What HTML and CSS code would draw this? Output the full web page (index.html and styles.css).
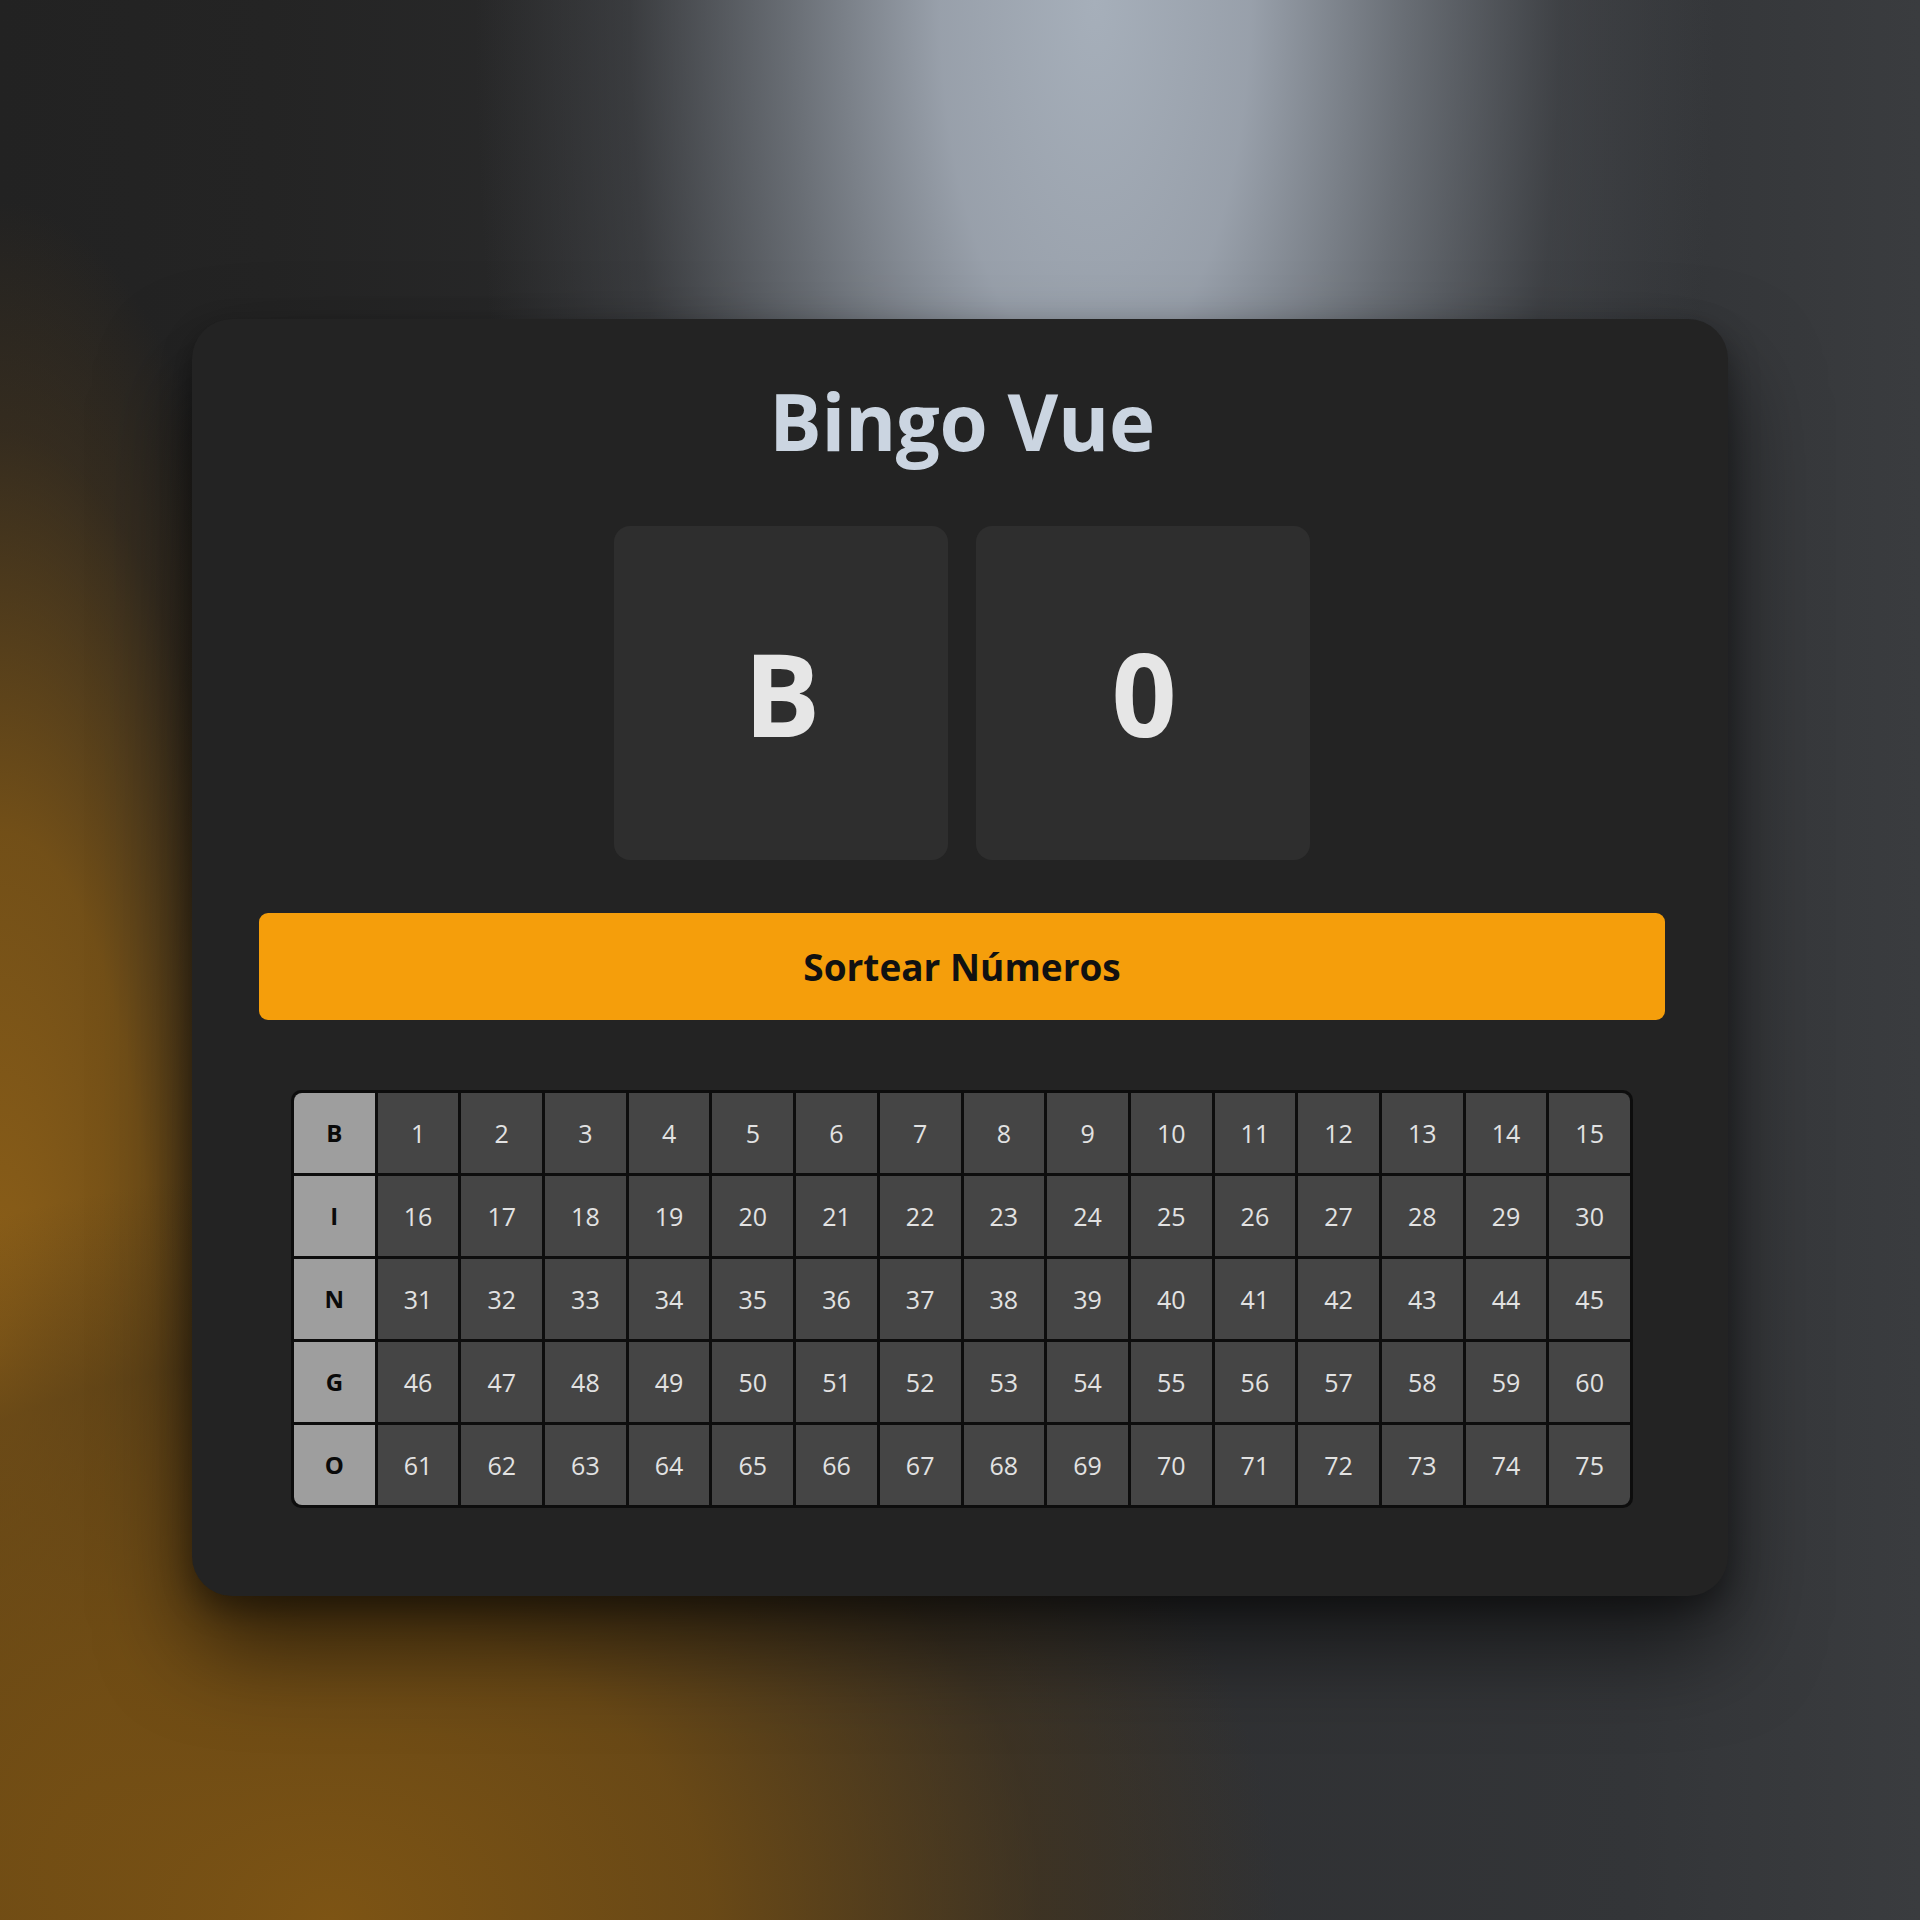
FILE: index.html
```html
<!DOCTYPE html>
<html lang="pt">
<head>
<meta charset="utf-8">
<title>Bingo Vue</title>
<link rel="stylesheet" href="styles.css">
</head>
<body>
<main class="card">
  <h1 class="title">Bingo Vue</h1>
  <div class="display">
    <div class="display-box">B</div>
    <div class="display-box">0</div>
  </div>
  <button class="draw-btn">Sortear Números</button>
  <div class="board">
    <div class="cell head">B</div><div class="cell">1</div><div class="cell">2</div><div class="cell">3</div><div class="cell">4</div><div class="cell">5</div><div class="cell">6</div><div class="cell">7</div><div class="cell">8</div><div class="cell">9</div><div class="cell">10</div><div class="cell">11</div><div class="cell">12</div><div class="cell">13</div><div class="cell">14</div><div class="cell tr">15</div>
    <div class="cell head">I</div><div class="cell">16</div><div class="cell">17</div><div class="cell">18</div><div class="cell">19</div><div class="cell">20</div><div class="cell">21</div><div class="cell">22</div><div class="cell">23</div><div class="cell">24</div><div class="cell">25</div><div class="cell">26</div><div class="cell">27</div><div class="cell">28</div><div class="cell">29</div><div class="cell">30</div>
    <div class="cell head">N</div><div class="cell">31</div><div class="cell">32</div><div class="cell">33</div><div class="cell">34</div><div class="cell">35</div><div class="cell">36</div><div class="cell">37</div><div class="cell">38</div><div class="cell">39</div><div class="cell">40</div><div class="cell">41</div><div class="cell">42</div><div class="cell">43</div><div class="cell">44</div><div class="cell">45</div>
    <div class="cell head">G</div><div class="cell">46</div><div class="cell">47</div><div class="cell">48</div><div class="cell">49</div><div class="cell">50</div><div class="cell">51</div><div class="cell">52</div><div class="cell">53</div><div class="cell">54</div><div class="cell">55</div><div class="cell">56</div><div class="cell">57</div><div class="cell">58</div><div class="cell">59</div><div class="cell">60</div>
    <div class="cell head bl">O</div><div class="cell">61</div><div class="cell">62</div><div class="cell">63</div><div class="cell">64</div><div class="cell">65</div><div class="cell">66</div><div class="cell">67</div><div class="cell">68</div><div class="cell">69</div><div class="cell">70</div><div class="cell">71</div><div class="cell">72</div><div class="cell">73</div><div class="cell">74</div><div class="cell br">75</div>
  </div>
</main>
</body>
</html>
```

FILE: styles.css
```css
* { box-sizing: border-box; }

html, body { margin: 0; padding: 0; }

body {
  min-height: 1920px;
  padding-bottom: 6px;
  display: flex;
  align-items: center;
  justify-content: center;
  font-family: "Open Sans", "Noto Sans", sans-serif;
  background-color: #2d2e30;
  background-image:
    radial-gradient(ellipse 620px 1500px at 1095px 0px, rgba(166,175,186,1) 0%, rgba(158,166,177,0.95) 25%, rgba(120,126,134,0.78) 50%, rgba(75,78,83,0.5) 75%, rgba(50,52,55,0) 100%),
    radial-gradient(ellipse 950px 750px at 330px 1920px, rgba(125,84,20,1) 0%, rgba(112,76,20,0.9) 40%, rgba(75,54,22,0.5) 75%, rgba(40,34,28,0) 100%),
    radial-gradient(ellipse 340px 1150px at 0px 1350px, rgba(142,96,24,1) 0%, rgba(128,87,22,0.85) 45%, rgba(80,58,26,0.4) 80%, rgba(60,45,25,0) 100%),
    linear-gradient(90deg, #222222 0%, #242424 14%, #2e2f31 50%, #333538 85%, #3a3c3f 100%);
}

.card {
  width: 1536px;
  background: #232323;
  border-radius: 40px;
  padding: 49px 63px 88px 67px;
  display: flex;
  flex-direction: column;
  align-items: center;
  box-shadow: 0 50px 90px rgba(0,0,0,0.55), 0 12px 30px rgba(0,0,0,0.35);
}

.title {
  margin: 0;
  font-size: 78px;
  font-weight: 700;
  line-height: 106px;
  color: #cbd5e1;
  letter-spacing: -0.3px;
}

.display {
  margin-top: 52px;
  display: flex;
  gap: 28px;
}

.display-box {
  width: 334px;
  height: 334px;
  background: #2e2e2e;
  border-radius: 16px;
  display: flex;
  align-items: center;
  justify-content: center;
  font-size: 114px;
  font-weight: 700;
  color: #e6e6e6;
  letter-spacing: -2px;
}

.draw-btn {
  margin-top: 53px;
  width: 100%;
  height: 107px;
  border: none;
  border-radius: 9px;
  background: #f59e0b;
  color: #111;
  font-family: "Open Sans", "Noto Sans", sans-serif;
  font-size: 37px;
  font-weight: 700;
  cursor: pointer;
}

.board {
  margin-top: 70px;
  width: 1342px;
  display: grid;
  grid-template-columns: repeat(16, 1fr);
  grid-auto-rows: 80px;
  gap: 3px;
  padding: 3px;
  background: #0d0d0d;
  border-radius: 10px;
}

.cell {
  background: #454545;
  color: #e2e2e2;
  font-size: 25px;
  display: flex;
  align-items: center;
  justify-content: center;
}

.cell.head {
  background: #9e9e9e;
  color: #0a0a0a;
  font-weight: 700;
  font-size: 24px;
}

.head:first-child { border-top-left-radius: 8px; }
.tr { border-top-right-radius: 8px; }
.bl { border-bottom-left-radius: 8px; }
.br { border-bottom-right-radius: 8px; }
```
